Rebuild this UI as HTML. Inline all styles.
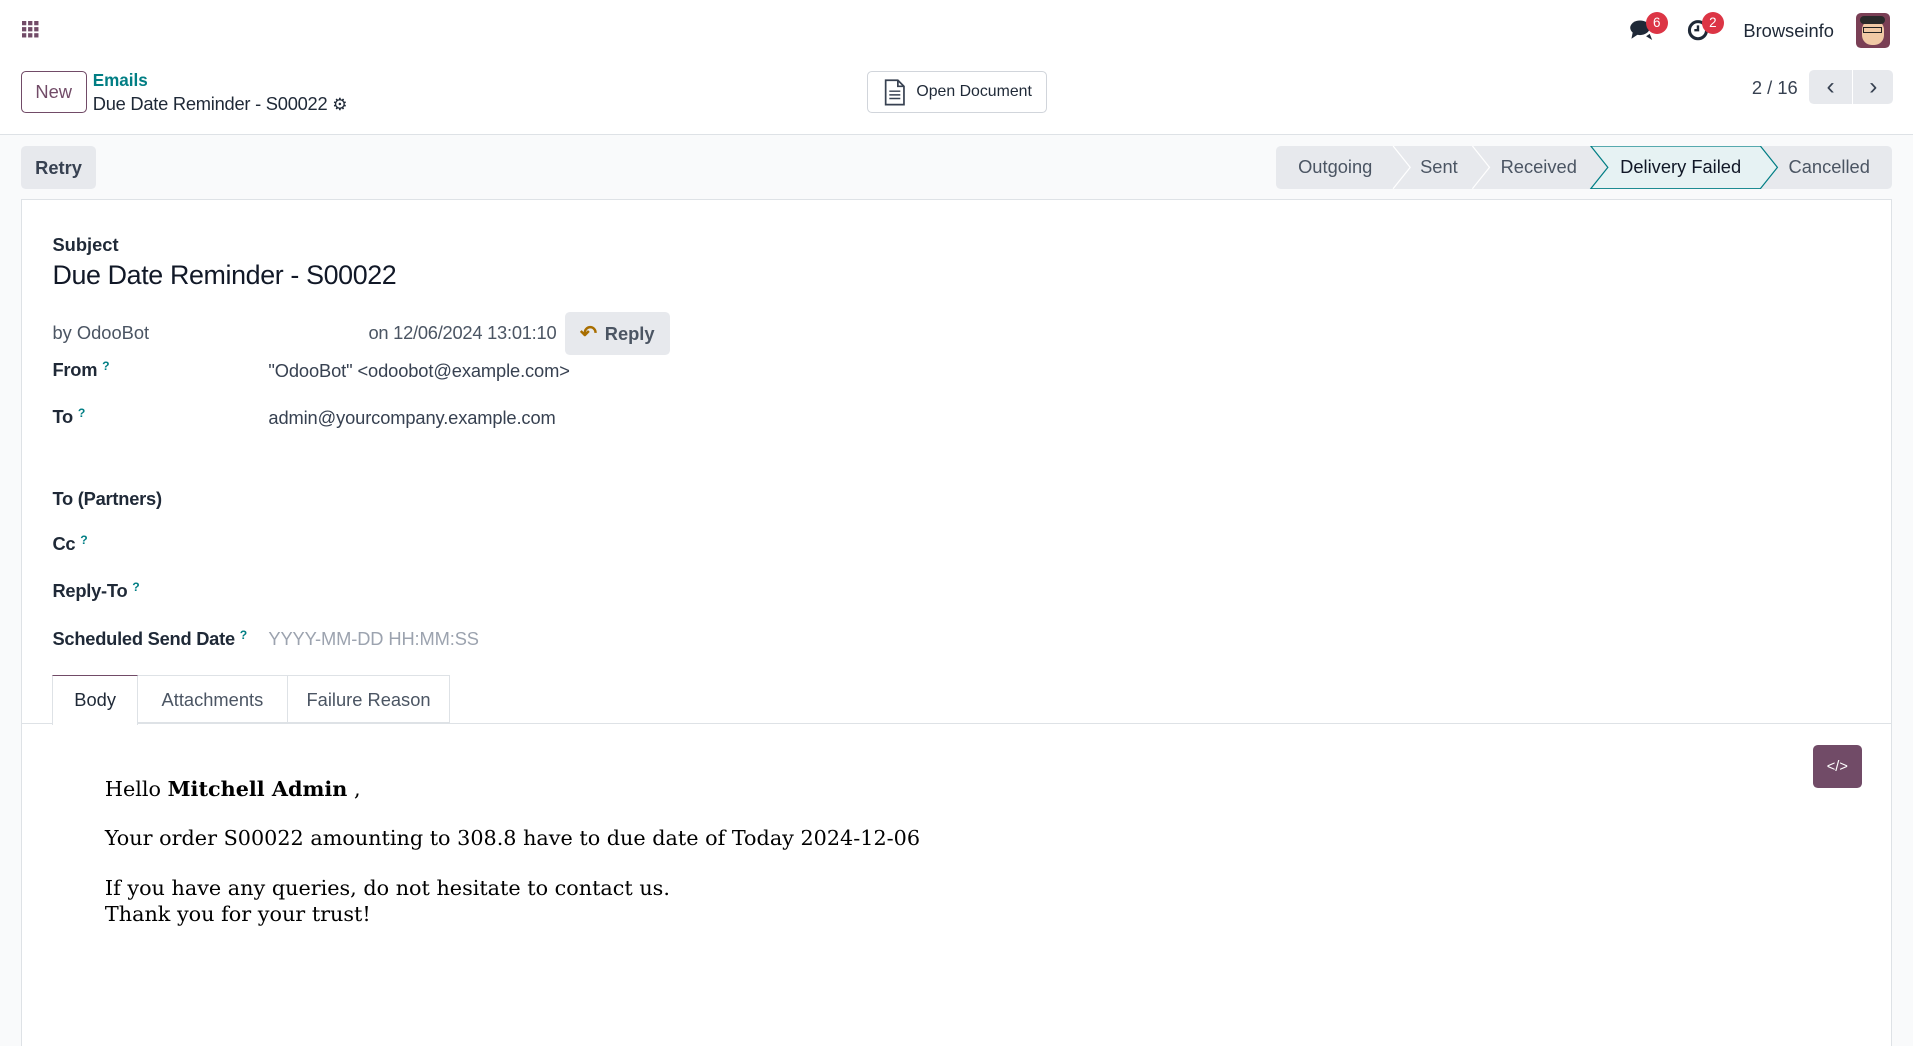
<!DOCTYPE html>
<html><head><meta charset="utf-8"><style>
html,body{margin:0;padding:0;overflow:hidden}
body{width:1913px;height:1046px;background:#fff;font-family:"Liberation Sans",sans-serif;color:#374151}
#w{zoom:1.22;width:1568px;height:857px;position:relative}
.a{position:absolute}
.btn{position:absolute;border-radius:4px;box-sizing:border-box;font-size:15px;display:flex;align-items:center;justify-content:center}
.lbl{position:absolute;left:43px;font-size:15px;font-weight:bold;color:#1f2937;letter-spacing:-0.2px}
.q{color:#017e84;font-size:10px;vertical-align:top;margin-left:4px}
.val{position:absolute;left:220px;font-size:15px;color:#374151;letter-spacing:-0.1px}
</style></head><body><div id="w">
<svg class="a" style="left:18px;top:17px" width="14" height="14"><g fill="#714b67"><rect x="0" y="0" width="3.5" height="3.5"/><rect x="5" y="0" width="3.5" height="3.5"/><rect x="10" y="0" width="3.5" height="3.5"/><rect x="0" y="5" width="3.5" height="3.5"/><rect x="5" y="5" width="3.5" height="3.5"/><rect x="10" y="5" width="3.5" height="3.5"/><rect x="0" y="10" width="3.5" height="3.5"/><rect x="5" y="10" width="3.5" height="3.5"/><rect x="10" y="10" width="3.5" height="3.5"/></g></svg>
<svg class="a" style="left:1335px;top:15px" width="22" height="20"><ellipse cx="9" cy="8" rx="8" ry="6" fill="#1f2937"/><path d="M3 12 L2 17 L8 13Z" fill="#1f2937"/><path d="M14 15 L19 18 L17 13Z" fill="#1f2937"/></svg>
<div class="a" style="left:1349px;top:10px;width:18px;height:18px;border-radius:9px;background:#dc3545;color:#fff;font-size:11px;text-align:center;line-height:18px">6</div>
<svg class="a" style="left:1383px;top:15px" width="20" height="20"><circle cx="9" cy="10" r="7" fill="none" stroke="#1f2937" stroke-width="2.5"/><path d="M9 6 V10 H6" stroke="#1f2937" stroke-width="2" fill="none"/></svg>
<div class="a" style="left:1395px;top:10px;width:18px;height:18px;border-radius:9px;background:#dc3545;color:#fff;font-size:11px;text-align:center;line-height:18px">2</div>
<div class="a" style="left:1429px;top:16px;font-size:15px;color:#1f2937">Browseinfo</div>
<div class="a" style="left:1521px;top:11px;width:28px;height:28px;border-radius:4px;background:#7a3f55;overflow:hidden"><div class="a" style="left:5px;top:5px;width:18px;height:21px;border-radius:8px;background:#f1c9a5"></div><div class="a" style="left:4px;top:2px;width:20px;height:7px;border-radius:4px;background:#2a2a2a"></div><div class="a" style="left:6px;top:11px;width:16px;height:5px;border:1.5px solid #222;box-sizing:border-box"></div></div>

<div class="btn" style="left:17px;top:58px;width:54px;height:35px;border:1px solid #714b67;color:#714b67">New</div>
<div class="a" style="left:76px;top:58px;font-size:14px;color:#017e84;font-weight:bold">Emails</div>
<div class="a" style="left:76px;top:76px;font-size:15px;color:#1f2937;letter-spacing:-0.2px">Due Date Reminder - S00022 <span style="font-size:14px">⚙</span></div>
<div class="btn" style="left:711px;top:58px;width:147px;height:35px;border:1px solid #d1d5db;color:#1f2937;font-size:13px"><svg width="20" height="22" style="margin-right:8px"><path d="M3 1 H13 L18 6 V21 H3Z M13 1 V6 H18" fill="none" stroke="#374151" stroke-width="1.4"/><path d="M6 10H15M6 13H15M6 16H15" stroke="#374151" stroke-width="1.2"/></svg>Open Document</div>
<div class="a" style="left:1436px;top:63px;font-size:15px;color:#374151">2 / 16</div>
<div class="btn" style="left:1483px;top:57px;width:35px;height:28px;background:#e7e9ed;border-radius:4px 0 0 4px;font-size:20px">‹</div>
<div class="btn" style="left:1519px;top:57px;width:33px;height:28px;background:#e7e9ed;border-radius:0 4px 4px 0;font-size:20px">›</div>

<div class="a" style="left:0;top:110px;width:1568px;height:747px;background:#f9fafb;border-top:1px solid #dee2e6"></div>
<div class="btn" style="left:17px;top:120px;width:62px;height:35px;background:#e7e9ed;color:#374151;font-weight:bold">Retry</div>
<div class="a" style="left:1046px;top:120px;width:505px;height:35px;background:#e7e9ed;border-radius:4px"></div>
<svg class="a" style="left:1046px;top:120px" width="505" height="35">
<path d="M96 0 L110 17.5 L96 35" stroke="#fff" fill="none"/>
<path d="M161 0 L175 17.5 L161 35" stroke="#fff" fill="none"/>
<path d="M258 0 L397 0 L411 17.5 L397 35 L258 35 L272 17.5Z" fill="#e6f2f3" stroke="#017e84" stroke-width="1"/>
</svg>
<div class="a" style="left:1064px;top:128px;font-size:15px;color:#4b5563">Outgoing</div>
<div class="a" style="left:1164px;top:128px;font-size:15px;color:#4b5563">Sent</div>
<div class="a" style="left:1230px;top:128px;font-size:15px;color:#4b5563">Received</div>
<div class="a" style="left:1328px;top:128px;font-size:15px;color:#111827">Delivery Failed</div>
<div class="a" style="left:1466px;top:128px;font-size:15px;color:#4b5563">Cancelled</div>

<div class="a" style="left:17px;top:163px;width:1534px;height:700px;background:#fff;border:1px solid #dee2e6;box-sizing:border-box"></div>
<div class="a" style="left:43px;top:192px;font-size:15px;font-weight:bold;color:#1f2937">Subject</div>
<div class="a" style="left:43px;top:213px;font-size:22px;color:#111827;letter-spacing:-0.3px">Due Date Reminder - S00022</div>
<div class="a" style="left:43px;top:264px;font-size:15px;color:#4b5563">by OdooBot</div>
<div class="a" style="left:302px;top:264px;font-size:15px;color:#4b5563;letter-spacing:-0.2px">on 12/06/2024 13:01:10</div>
<div class="btn" style="left:463px;top:256px;width:86px;height:35px;background:#e7e9ed;font-weight:bold;color:#4b5563"><span style="color:#a86e00;margin-right:6px;font-size:17px">↶</span>Reply</div>
<div class="lbl" style="top:294px">From<span class="q">?</span></div>
<div class="val" style="top:295px">"OdooBot" &lt;odoobot@example.com&gt;</div>
<div class="lbl" style="top:333px">To<span class="q">?</span></div>
<div class="val" style="top:334px">admin@yourcompany.example.com</div>
<div class="lbl" style="top:400px">To (Partners)</div>
<div class="lbl" style="top:437px">Cc<span class="q">?</span></div>
<div class="lbl" style="top:475px">Reply-To<span class="q">?</span></div>
<div class="lbl" style="top:515px">Scheduled Send Date<span class="q">?</span></div>
<div class="val" style="top:515px;color:#9ca3af">YYYY-MM-DD HH:MM:SS</div>

<div class="a" style="left:18px;top:593px;width:1532px;border-top:1px solid #dee2e6"></div>
<div class="a" style="left:43px;top:553px;width:70px;height:41px;background:#fff;border:1px solid #dee2e6;border-top:1px solid #714b67;border-bottom:none;box-sizing:border-box;font-size:15px;text-align:center;line-height:40px;color:#1f2937">Body</div>
<div class="a" style="left:113px;top:553px;width:123px;height:40px;border:1px solid #dee2e6;border-left:none;box-sizing:border-box;font-size:15px;text-align:center;line-height:40px;color:#4b5563">Attachments</div>
<div class="a" style="left:236px;top:553px;width:133px;height:40px;border:1px solid #dee2e6;border-left:none;box-sizing:border-box;font-size:15px;text-align:center;line-height:40px;color:#4b5563">Failure Reason</div>
<div class="btn" style="left:1486px;top:611px;width:40px;height:35px;background:#714b67;color:#fff;font-size:12px">&lt;/&gt;</div>

<div class="a" style="left:86px;top:637px;font-family:'DejaVu Serif','Liberation Serif',serif;font-size:17px;color:#000;line-height:21px">
Hello <b>Mitchell Admin</b> ,<br><div style="height:19px"></div>
Your order S00022 amounting to 308.8 have to due date of Today 2024-12-06<br><div style="height:20px"></div>
If you have any queries, do not hesitate to contact us.<br>Thank you for your trust!
</div>
</div></body></html>
